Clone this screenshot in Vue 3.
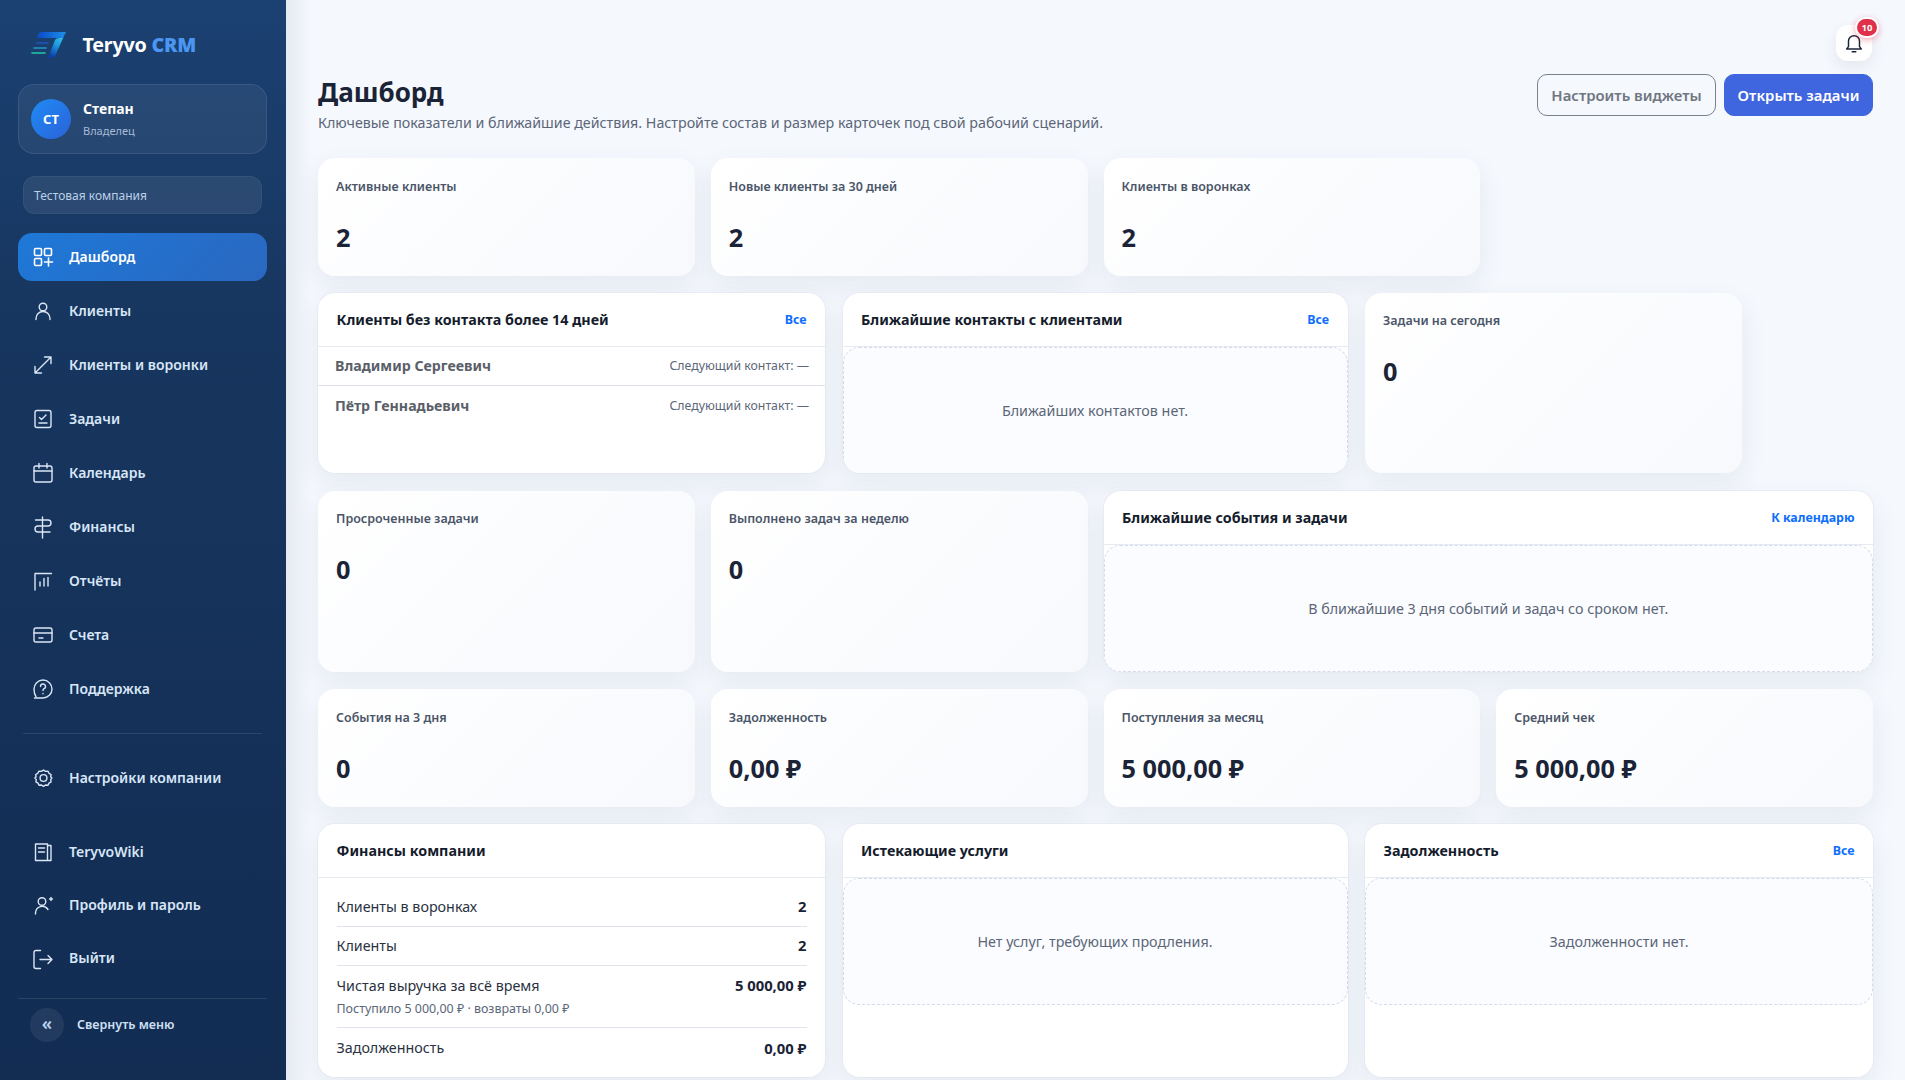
<script setup>
const top = [
  { t: 'Дашборд', i: 'dash', active: true },
  { t: 'Клиенты', i: 'user' },
  { t: 'Клиенты и воронки', i: 'arrows' },
  { t: 'Задачи', i: 'task' },
  { t: 'Календарь', i: 'cal' },
  { t: 'Финансы', i: 'sign' },
  { t: 'Отчёты', i: 'chart' },
  { t: 'Счета', i: 'card' },
  { t: 'Поддержка', i: 'help' }
]
const bottom = [
  { t: 'TeryvoWiki', i: 'book' },
  { t: 'Профиль и пароль', i: 'userplus' },
  { t: 'Выйти', i: 'exit' }
]
const paths = {
  dash: '<rect x="3.5" y="3.5" width="7" height="7" rx="1.2"/><rect x="13.5" y="3.5" width="7" height="7" rx="1.2"/><rect x="3.5" y="13.5" width="7" height="7" rx="1.2"/><path d="M13.5 17h8M17.5 13v8"/>',
  user: '<circle cx="12" cy="8" r="3.8"/><path d="M5 20.5v-1a7 7 0 0 1 14 0v1"/>',
  arrows: '<path d="M4.5 19.5 19.5 4.5M13.5 4H20v6.5M4 13.5V20h6.5"/>',
  task: '<rect x="4" y="3.5" width="16" height="17" rx="2"/><path d="m8.5 10.5 2 2 4.5-4.5M8 16h8"/>',
  cal: '<rect x="3" y="5" width="18" height="16" rx="2"/><path d="M3 10h18M8 2.5V7M16 2.5V7"/>',
  sign: '<path d="M11.5 2v21M4.5 5H17a3 3 0 0 1 0 6H7a3 3 0 0 0 0 6h12"/>',
  chart: '<path d="M4 21V4.5h16.5M9 17v-4M13 17V9.5M17 17V8.5"/>',
  card: '<rect x="3" y="5" width="18" height="14" rx="2"/><path d="M3 10h18M8 15h4"/>',
  help: '<path d="M5 19.5C3.7 17.8 3 15 3 12a9 9 0 1 1 9 9H3.5"/><path d="M9.5 9.5a2.5 2.5 0 1 1 3.6 2.2c-.7.4-1.1 1-1.1 1.8M12 16.5v.2"/>',
  gear: '<circle cx="12.5" cy="12" r="3.4"/><path d="m12.5 4 2 1.4 2.5-.2 1 2.1 2.1 1.2-.4 2.3 1.2 1.2-1.2 1.6.4 2.3-2.1 1.2-1 2.1-2.5-.2-2 1.4-2-1.4-2.5.2-1-2.1-2.1-1.2.4-2.3L3.9 12l1.2-1.2-.4-2.3 2.1-1.2 1-2.1 2.5.2z"/>',
  book: '<path d="M4.5 4h12v16.5h-12zM16.5 5.5h3.5v15h-3.5M7.5 8h6M7.5 12h6"/>',
  userplus: '<circle cx="11" cy="8.5" r="3.8"/><path d="M4.5 21v-1a6.8 6.8 0 0 1 12.5-3.5M20 4.5v3M18.5 6h3"/>',
  exit: '<path d="M9.5 3.5H5a2 2 0 0 0-2 2v14a2 2 0 0 0 2 2h4.5M9 12.5h11.5M17 8.5l4 4-4 4"/>'
}
const rows = [
  { cls: 'r1', cards: [
    { k: 'stat', t: 'Активные клиенты', v: '2' },
    { k: 'stat', t: 'Новые клиенты за 30 дней', v: '2' },
    { k: 'stat', t: 'Клиенты в воронках', v: '2' }
  ]},
  { cls: 'r2', cards: [
    { k: 'list', t: 'Клиенты без контакта более 14 дней', a: 'Все' },
    { k: 'empty', t: 'Ближайшие контакты с клиентами', a: 'Все', e: 'Ближайших контактов нет.' },
    { k: 'stat', t: 'Задачи на сегодня', v: '0' }
  ]},
  { cls: 'r3', cards: [
    { k: 'stat', t: 'Просроченные задачи', v: '0' },
    { k: 'stat', t: 'Выполнено задач за неделю', v: '0' },
    { k: 'empty', t: 'Ближайшие события и задачи', a: 'К календарю', e: 'В ближайшие 3 дня событий и задач со сроком нет.' }
  ]},
  { cls: 'r4', cards: [
    { k: 'stat', t: 'События на 3 дня', v: '0' },
    { k: 'stat', t: 'Задолженность', v: '0,00 ₽' },
    { k: 'stat', t: 'Поступления за месяц', v: '5 000,00 ₽' },
    { k: 'stat', t: 'Средний чек', v: '5 000,00 ₽' }
  ]},
  { cls: 'r5', cards: [
    { k: 'fin', t: 'Финансы компании' },
    { k: 'empty', t: 'Истекающие услуги', e: 'Нет услуг, требующих продления.' },
    { k: 'empty', t: 'Задолженность', a: 'Все', e: 'Задолженности нет.' }
  ]}
]
const clients = ['Владимир Сергеевич', 'Пётр Геннадьевич']
</script>

<template>
  <div class="app">
    <aside class="side">
      <div class="brand">
        <svg class="logo" viewBox="0 0 36 28" width="36" height="28">
          <defs>
            <linearGradient id="lg1" x1="0" y1="0" x2="1" y2="0"><stop offset="0" stop-color="#0a48c8"/><stop offset="1" stop-color="#1f8fe8"/></linearGradient>
            <linearGradient id="lg2" x1="0.7" y1="0" x2="0.3" y2="1"><stop offset="0" stop-color="#3fd4ea"/><stop offset="0.5" stop-color="#1d9be0"/><stop offset="1" stop-color="#0a3ea8"/></linearGradient>
          </defs>
          <path d="M9 1H35L32 7H6Q7 3 9 1z" fill="url(#lg1)"/>
          <path d="M35 1 33 5 24 25Q22 27 17 27L24 9Q25 7 29 7H32z" fill="url(#lg2)"/>
          <path d="M6 12h11" stroke="#1c55c0" stroke-width="1.6" stroke-linecap="round"/>
          <path d="M3 17h12" stroke="#2496c4" stroke-width="1.6" stroke-linecap="round"/>
          <path d="M1 22h13" stroke="#20c8ac" stroke-width="1.6" stroke-linecap="round"/>
        </svg>
        <span class="bname">Teryvo <b>CRM</b></span>
      </div>
      <div class="prof">
        <div class="ava">СТ</div>
        <div class="pinfo">
          <div class="pname">Степан</div>
          <div class="prole">Владелец</div>
        </div>
      </div>
      <div class="comp">Тестовая компания</div>
      <nav class="nav">
        <a v-for="n in top" :key="n.t" class="item" :class="{ active: n.active }">
          <svg class="ico" viewBox="0 0 24 24" v-html="paths[n.i]"></svg>
          <span class="lab">{{ n.t }}</span>
        </a>
      </nav>
      <div class="sep"></div>
      <a class="item gear"><svg class="ico" viewBox="0 0 24 24" v-html="paths.gear"></svg><span class="lab">Настройки компании</span></a>
      <nav class="nav2">
        <a v-for="n in bottom" :key="n.t" class="item low">
          <svg class="ico" viewBox="0 0 24 24" v-html="paths[n.i]"></svg>
          <span class="lab">{{ n.t }}</span>
        </a>
      </nav>
      <div class="collapse">
        <span class="cbtn">«</span>
        <span>Свернуть меню</span>
      </div>
    </aside>
    <main class="main">
      <div class="topbar">
        <div class="bell">
          <svg viewBox="0 0 24 24" width="22" height="22" fill="none" stroke="#1b2336" stroke-width="1.6" stroke-linecap="round" stroke-linejoin="round"><path d="M6 16V10a6 6 0 0 1 12 0v6l2 2.5H4zM10 21.5h4"/></svg>
          <span class="badge">10</span>
        </div>
      </div>
      <header class="head">
        <div class="htext">
          <h1>Дашборд</h1>
          <p>Ключевые показатели и ближайшие действия. Настройте состав и размер карточек под свой рабочий сценарий.</p>
        </div>
        <div class="btns">
          <button class="btn ghost">Настроить виджеты</button>
          <button class="btn primary">Открыть задачи</button>
        </div>
      </header>
      <section v-for="r in rows" :key="r.cls" class="row" :class="r.cls">
        <template v-for="c in r.cards" :key="c.t">
          <div v-if="c.k === 'stat'" class="card stat">
            <div class="st">{{ c.t }}</div>
            <div class="sv">{{ c.v }}</div>
          </div>
          <div v-else class="card panel">
            <div class="ph"><span class="pt">{{ c.t }}</span><a v-if="c.a" class="pa">{{ c.a }}</a></div>
            <div v-if="c.k === 'empty'" class="empty">{{ c.e }}</div>
            <div v-else-if="c.k === 'list'" class="list">
              <div v-for="n in clients" :key="n" class="li"><span class="ln">{{ n }}</span><span class="lm">Следующий контакт: —</span></div>
            </div>
            <div v-else class="fin">
              <div class="fr"><span>Клиенты в воронках</span><b>2</b></div>
              <div class="fr"><span>Клиенты</span><b>2</b></div>
              <div class="fr tall"><div class="frt"><span>Чистая выручка за всё время</span><b>5 000,00 ₽</b></div><small>Поступило 5 000,00 ₽ · возвраты 0,00 ₽</small></div>
              <div class="fr last"><span>Задолженность</span><b>0,00 ₽</b></div>
            </div>
          </div>
        </template>
      </section>
    </main>
  </div>
</template>

<style>
html, body { margin: 0; height: 100%; overflow: hidden; background: #f5f8fd; }
</style>

<style scoped>
* { box-sizing: border-box; }
.app { display: flex; width: 1905px; height: 1080px; overflow: hidden; font-family: "Noto Sans", "Open Sans", sans-serif; color: #1b2336; background: #f5f8fd; }
.side { width: 286px; flex: none; height: 1080px; padding: 0 19px 0 18px; color: #fff; background: linear-gradient(180deg, #1b4172 0%, #17365f 30%, #122c52 100%); display: flex; flex-direction: column; }
.brand { height: 84px; display: flex; align-items: center; padding-left: 13px; gap: 15.5px; padding-top: 6px; }
.logo { flex: none; margin-top: -1px; }
.bname { font-size: 19.7px; font-weight: 700; letter-spacing: -.2px; line-height: 24px; margin-top: -1px; }
.bname b { color: #4a96f2; }
.prof { height: 70px; border-radius: 16px; background: rgba(255,255,255,.06); border: 1px solid rgba(255,255,255,.09); display: flex; align-items: center; padding: 0 12px; gap: 12px; }
.pinfo { padding-top: 1px; }
.ava { width: 40px; height: 40px; border-radius: 50%; background: linear-gradient(135deg, #1f8bf5, #2a62d8); display: flex; align-items: center; justify-content: center; font-size: 13px; font-weight: 700; }
.pname { font-size: 14px; font-weight: 700; line-height: 18px; }
.prole { font-size: 11px; line-height: 16px; margin-top: 5px; color: #a9bbd5; }
.comp { margin: 22px 5px 0; height: 38px; border-radius: 12px; background: rgba(255,255,255,.08); border: 1px solid rgba(255,255,255,.05); display: flex; align-items: center; padding: 0 10px; font-size: 12px; color: #bcd0e8; }
.nav { margin-top: 19px; display: flex; flex-direction: column; gap: 6px; }
.item { height: 48px; display: flex; align-items: center; padding-left: 13px; gap: 14px; font-size: 14px; font-weight: 600; color: #d8e6f7; border-radius: 14px; }
.lab { margin-top: -2px; }
.item.active { color: #fff; background: linear-gradient(135deg, #1e78d8, #2a68c0); }
.ico { width: 24px; height: 24px; flex: none; fill: none; stroke: #dbe6f5; stroke-width: 1.4; stroke-linecap: round; stroke-linejoin: round; }
.active .ico { stroke: #fff; stroke-width: 1.6; }
.sep { height: 1px; margin: 20px 5px 0; background: rgba(255,255,255,.1); flex: none; }
.gear { margin-top: 20px; flex: none; }
.nav2 { margin-top: 26px; display: flex; flex-direction: column; gap: 5.3px; }
.collapse { margin-top: 15px; border-top: 1px solid rgba(255,255,255,.1); padding: 9px 12px; display: flex; align-items: center; gap: 13px; font-size: 12.5px; font-weight: 600; color: #cfe0f5; }
.cbtn { width: 34px; height: 34px; border-radius: 50%; background: rgba(255,255,255,.07); display: flex; align-items: center; justify-content: center; font-size: 18px; color: #bcd4f0; padding-bottom: 3px; }
.main { flex: 1; min-width: 0; padding: 0 32px; background: linear-gradient(90deg, #e6eaf1 0, #f5f8fd 26px); }
.topbar { height: 61px; display: flex; justify-content: flex-end; align-items: flex-end; }
.bell { position: relative; width: 36px; height: 36px; margin-right: 1px; border-radius: 12px; background: #fff; box-shadow: 0 6px 16px rgba(27,35,54,.08); display: flex; align-items: center; justify-content: center; }
.badge { position: absolute; top: -8px; right: -7px; width: 24px; height: 21px; border-radius: 11px; background: #e0304a; border: 2px solid #fff; color: #fff; font-size: 9.5px; font-weight: 700; display: flex; align-items: center; justify-content: center; box-shadow: 0 2px 6px rgba(224,48,74,.4); }
.head { display: flex; justify-content: space-between; align-items: flex-start; height: 97px; padding-top: 13px; }
.htext { padding-top: 2px; }
h1 { margin: 0; font-size: 26px; font-weight: 700; line-height: 32px; color: #1b2336; }
.head p { margin: 5px 0 0; font-size: 14.25px; line-height: 20px; color: #5b6678; }
.btns { display: flex; gap: 8px; }
.btn { height: 42px; border-radius: 10px; font-family: inherit; font-size: 14.9px; font-weight: 600; padding: 0; }
.ghost { width: 179px; background: transparent; border: 1px solid #7b818b; color: #6f7680; }
.primary { width: 149px; background: #3f66de; border: 1px solid #3f66de; color: #fff; }
.row { display: grid; column-gap: 16px; }
.r1 { grid-template-columns: repeat(4, 1fr); height: 118px; margin-bottom: 16.5px; }
.r2 { grid-template-columns: 507px 505px 377px; column-gap: 17.5px; height: 180px; margin-bottom: 18px; }
.r3 { grid-template-columns: 376.75px 376.75px 1fr; height: 181px; margin-bottom: 17.5px; }
.r4 { grid-template-columns: repeat(4, 1fr); height: 118px; margin-bottom: 17px; }
.r5 { grid-template-columns: 507px 505px 508px; column-gap: 17.5px; height: 253px; }
.card { border-radius: 17px; background: #fff; box-shadow: 0 10px 28px rgba(30,50,90,.075); overflow: hidden; }
.stat { padding: 20px 18px; background: linear-gradient(135deg, #fff, #f7f9fd); }
.r2 .stat, .r3 .stat { padding-top: 19px; }
.st { font-size: 12.5px; font-weight: 600; line-height: 18px; color: #4a5568; }
.sv { margin-top: 23px; font-size: 25.3px; font-weight: 700; line-height: 36px; color: #1b2336; }
.panel { display: flex; flex-direction: column; box-shadow: 0 0 0 1px rgba(226,231,240,.6), 0 10px 28px rgba(30,50,90,.075); }
.ph { height: 54px; flex: none; padding: 0 18.5px; display: flex; align-items: center; justify-content: space-between; border-bottom: 1px solid #e6eaf2; }
.pt { font-size: 14.3px; font-weight: 700; color: #151c2b; }
.pa { font-size: 12.4px; font-weight: 700; color: #0d6efd; }
.empty { height: 127px; flex: none; display: flex; align-items: center; justify-content: center; font-size: 14.3px; color: #5b6678; background: #fbfcff; border: 1px dashed #d5dbe8; border-radius: 16px; }
.li { height: 39px; padding: 0 16px 0 17px; display: flex; justify-content: space-between; align-items: center; border-bottom: 1px solid #dfe3ec; }
.li:last-child { border-bottom: none; }
.ln { font-size: 14.2px; font-weight: 700; color: #5b5f69; }
.lm { font-size: 12.3px; color: #5b6678; }
.fin { padding: 10px 18.5px 0; }
.fr { height: 39px; padding-bottom: 2px; display: flex; justify-content: space-between; align-items: center; font-size: 14.3px; color: #2a3242; border-bottom: 1px solid #dfe3ec; }
.fr b { font-weight: 700; color: #1b2336; font-size: 14.8px; }
.fr.tall { height: 62px; display: block; padding-top: 9px; padding-bottom: 0; }
.frt { display: flex; justify-content: space-between; height: 22px; align-items: center; margin-top: -1px; }
.fr small { display: block; margin-top: 5px; font-size: 12.45px; line-height: 16px; color: #5b6678; }
.fr.last { border-bottom: none; height: 41px; }
</style>
